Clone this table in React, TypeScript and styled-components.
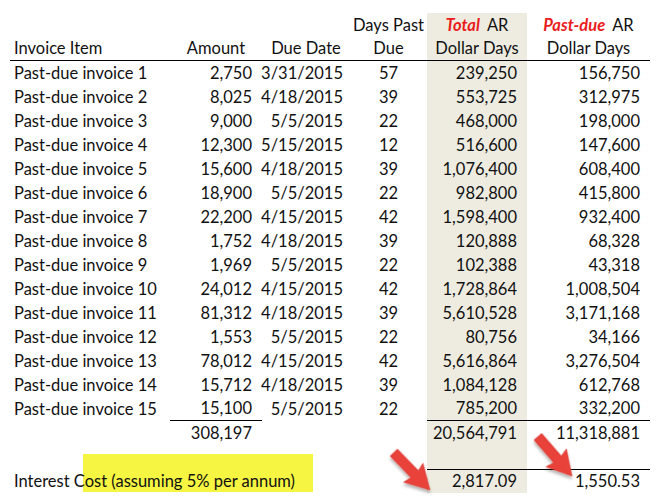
import React from 'react'
import styled, { createGlobalStyle } from 'styled-components'

const GlobalStyle = createGlobalStyle`
  html, body {
    margin: 0;
    padding: 0;
    background: #ffffff;
  }
  body {
    font-family: Lato, "Open Sans", "Liberation Sans", sans-serif;
    color: #111111;
  }
`

const Page = styled.div`
  position: relative;
  width: 661px;
  height: 497px;
  overflow: hidden;
  padding: 13px 0 0 10px;
  box-sizing: border-box;
`

const Sheet = styled.div`
  display: grid;
  grid-template-columns: 160px 92px 88px 77px 100px 123px;
  grid-auto-rows: 24px;
`

type CellProps = {
  align?: 'left' | 'right' | 'center'
  shade?: boolean
  lineBelow?: boolean
  lineAbove?: boolean
  span?: number
}

const Cell = styled.div<CellProps>`
  box-sizing: border-box;
  height: 24px;
  display: flex;
  align-items: center;
  justify-content: ${({ align }) =>
    align === 'right' ? 'flex-end' : align === 'center' ? 'center' : 'flex-start'};
  padding: ${({ align }) =>
    align === 'right' ? '0 10px 0 0' : align === 'center' ? '0' : '0 0 0 4px'};
  font-size: 16.5px;
  line-height: 1;
  white-space: nowrap;
  position: relative;
  background: ${({ shade }) => (shade ? '#eeece1' : 'transparent')};
  border-bottom: ${({ lineBelow }) => (lineBelow ? '1px solid #000' : 'none')};
  border-top: ${({ lineAbove }) => (lineAbove ? '1px solid #000' : 'none')};
  grid-column: ${({ span }) => (span ? `span ${span}` : 'auto')};
`

const DateCell = styled(Cell)`
  padding-right: 7px;
`

const Red = styled.span`
  color: #ea1c1c;
  font-weight: 700;
  font-style: italic;
  margin-right: 7px;
`

const Label = styled.span`
  position: relative;
  z-index: 1;
`

const Highlight = styled.div`
  position: absolute;
  left: 73px;
  top: -15px;
  width: 230px;
  height: 38px;
  background: #f5f542;
`

const ArrowLayer = styled.svg`
  position: absolute;
  left: 0;
  top: 0;
  pointer-events: none;
`

type Row = [string, string, string, string, string, string]

const rows: Row[] = [
  ['Past-due invoice 1', '2,750', '3/31/2015', '57', '239,250', '156,750'],
  ['Past-due invoice 2', '8,025', '4/18/2015', '39', '553,725', '312,975'],
  ['Past-due invoice 3', '9,000', '5/5/2015', '22', '468,000', '198,000'],
  ['Past-due invoice 4', '12,300', '5/15/2015', '12', '516,600', '147,600'],
  ['Past-due invoice 5', '15,600', '4/18/2015', '39', '1,076,400', '608,400'],
  ['Past-due invoice 6', '18,900', '5/5/2015', '22', '982,800', '415,800'],
  ['Past-due invoice 7', '22,200', '4/15/2015', '42', '1,598,400', '932,400'],
  ['Past-due invoice 8', '1,752', '4/18/2015', '39', '120,888', '68,328'],
  ['Past-due invoice 9', '1,969', '5/5/2015', '22', '102,388', '43,318'],
  ['Past-due invoice 10', '24,012', '4/15/2015', '42', '1,728,864', '1,008,504'],
  ['Past-due invoice 11', '81,312', '4/18/2015', '39', '5,610,528', '3,171,168'],
  ['Past-due invoice 12', '1,553', '5/5/2015', '22', '80,756', '34,166'],
  ['Past-due invoice 13', '78,012', '4/15/2015', '42', '5,616,864', '3,276,504'],
  ['Past-due invoice 14', '15,712', '4/18/2015', '39', '1,084,128', '612,768'],
  ['Past-due invoice 15', '15,100', '5/5/2015', '22', '785,200', '332,200'],
]

// block arrow pointing along +x, tip at origin
const arrowPath = 'M-52,-5 L-22,-5 L-24,-13.5 L0,0 L-24,13.5 L-22,5 L-52,5 Z'

const Arrow = ({ x, y, angle }: { x: number; y: number; angle: number }) => (
  <g transform={`translate(${x} ${y}) rotate(${angle})`}>
    <path
      d={arrowPath}
      fill="#e8433b"
      stroke="#d7342d"
      strokeWidth="0.6"
      strokeLinejoin="round"
      filter="url(#shadow)"
    />
  </g>
)

const App = () => {
  const last = rows.length - 1
  return (
    <Page>
      <GlobalStyle />
      <Sheet>
        <Cell />
        <Cell />
        <Cell />
        <Cell align="center">Days Past</Cell>
        <Cell align="center" shade>
          <Red>Total</Red>AR
        </Cell>
        <Cell align="center">
          <Red>Past-due</Red>AR
        </Cell>

        <Cell lineBelow>Invoice Item</Cell>
        <Cell align="center" lineBelow>Amount</Cell>
        <Cell align="center" lineBelow>Due Date</Cell>
        <Cell align="center" lineBelow>Due</Cell>
        <Cell align="center" shade lineBelow>Dollar Days</Cell>
        <Cell align="center" lineBelow>Dollar Days</Cell>

        {rows.map((r, i) => (
          <React.Fragment key={r[0]}>
            <Cell>{r[0]}</Cell>
            <Cell align="right" lineBelow={i === last}>{r[1]}</Cell>
            <DateCell align="right">{r[2]}</DateCell>
            <Cell align="center">{r[3]}</Cell>
            <Cell align="right" shade lineBelow={i === last}>{r[4]}</Cell>
            <Cell align="right" lineBelow={i === last}>{r[5]}</Cell>
          </React.Fragment>
        ))}

        <Cell />
        <Cell align="right">308,197</Cell>
        <Cell />
        <Cell />
        <Cell align="right" shade>20,564,791</Cell>
        <Cell align="right">11,318,881</Cell>

        <Cell span={4} />
        <Cell shade />
        <Cell />

        <Cell span={4}>
          <Highlight />
          <Label>Interest Cost (assuming 5% per annum)</Label>
        </Cell>
        <Cell align="right" shade lineAbove>2,817.09</Cell>
        <Cell align="right" lineAbove>1,550.53</Cell>
      </Sheet>

      <ArrowLayer width="661" height="497" viewBox="0 0 661 497">
        <defs>
          <filter id="shadow" x="-30%" y="-30%" width="160%" height="160%">
            <feDropShadow dx="2" dy="2" stdDeviation="1.6" floodColor="#000" floodOpacity="0.3" />
          </filter>
        </defs>
        <Arrow x={430} y={490} angle={46} />
        <Arrow x={572} y={476} angle={49} />
      </ArrowLayer>
    </Page>
  )
}

export default App
